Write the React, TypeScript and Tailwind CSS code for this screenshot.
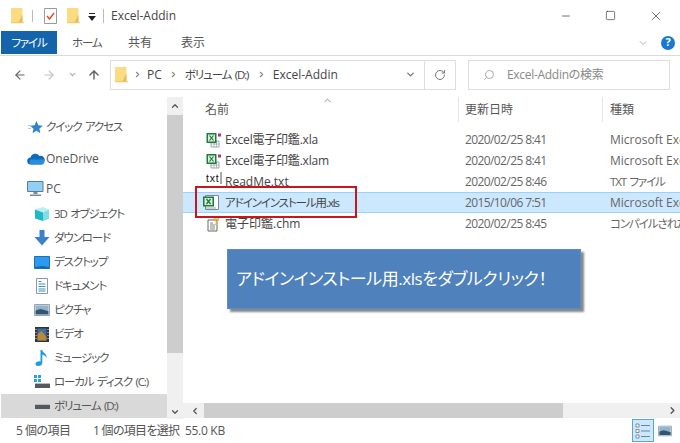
import { ChevronDown, ChevronUp, ChevronLeft, ChevronRight, ArrowLeft, ArrowRight, ArrowUp, RotateCw, Search, Minus, Square, X } from "lucide-react";
import type { ReactNode } from "react";

const FONT = "font-['Open_Sans','Noto_Sans_CJK_JP',sans-serif] [font-feature-settings:'palt']";
// Katakana in the reference is set much narrower than Noto's
const KANA = "text-[11.5px] tracking-[-1.1px] [word-spacing:1.5px]";

function FolderIcon({ className = "" }: { className?: string }) {
  return (
    <svg viewBox="0 0 13 16" className={className}>
      <path d="M0 0.5h11.5v13.5l1.5 1.5H0z" fill="#fbdc83" />
      <path d="M11.5 7v7.5h-4z" fill="#e6bd5c" />
      <path d="M0 15h13v.7H0z" fill="#e3b95a" />
    </svg>
  );
}

function ExcelIcon({ legacy = false }: { legacy?: boolean }) {
  if (legacy) {
    return (
      <svg viewBox="0 0 18 17" className="mr-[2px] h-[17px] w-[18px]">
        <path d="M3.500 1.500h13v14h-13z" fill="#fff" stroke="#7a8a90" />
        <path d="M1 2.500h11v10H1z" fill="#1f7a3c" />
        <path d="M2.500 4h8v7h-8z" fill="#d8efdc" />
        <path d="M4.500 5l4 5M8.500 5l-4 5" stroke="#1f7a3c" strokeWidth="1.300" />
        <path d="M4 14h10" stroke="#9aa6ab" />
      </svg>
    );
  }
  return (
    <svg viewBox="0 0 16 16" className="h-4 w-4">
      <path d="M5 9h8v6H5z" fill="#fff" stroke="#8a949a" strokeWidth="0.8" />
      <path d="M5 12h8M8 9v6M10.500 9v6" stroke="#8a949a" strokeWidth="0.6" />
      <path d="M0.5 1h10v10h-10z" fill="#1f7a3c" />
      <path d="M2 2.500h7v7H2z" fill="#d8efdc" />
      <path d="M3.500 3.500l4 5M7.500 3.500l-4 5" stroke="#1f7a3c" strokeWidth="1.200" />
      <path d="M12 1.500h3v3h-3z" fill="#b5307e" />
    </svg>
  );
}

function TxtIcon() {
  return (
    <svg viewBox="0 0 16 16" className="h-4 w-4 overflow-visible">
      <path d="M15 -2v12" stroke="#555" strokeWidth="1" />
      <text x="0" y="8" fontSize="10.500" letterSpacing="0.8" fontFamily="'Liberation Sans',sans-serif" fill="#111">txt</text>
    </svg>
  );
}

function ChmIcon() {
  return (
    <svg viewBox="0 0 16 16" className="h-4 w-4">
      <path d="M2 4h9v11H2z" fill="#fff" stroke="#666" />
      <path d="M4 7h3M4 9h5M4 11h5M4 13h5" stroke="#666" strokeWidth="0.8" />
      <text x="7" y="9" fontSize="11" fontWeight="700" fontFamily="'Liberation Sans',sans-serif" fill="#e3b21c">?</text>
    </svg>
  );
}

const NAV_ICONS: Record<string, ReactNode> = {
  star: (
    <svg viewBox="0 0 16 16" className="h-[15px] w-[15px]">
      <path d="M9 1l2 4.700 4.700.4-3.600 3.100 1.100 4.800L9 11.500 4.800 14l1.100-4.800L2.300 6.100 7 5.700z" fill="#2f83c8" />
      <path d="M0 6h3M0 9h3" stroke="#9cc6e6" />
    </svg>
  ),
  cloud: (
    <svg viewBox="0 0 18 12" className="h-[12px] w-[18px]">
      <path d="M4 11.500a3.500 3.500 0 0 1-.5-7A5 5 0 0 1 12.500 3 4 4 0 0 1 17.500 8c0 2-1.500 3.500-3 3.500z" fill="#0f6cbd" />
      <path d="M4 11.500a3 3 0 0 1 0-5h13.300c.6 3-1.300 5-3.300 5z" fill="#2a8ddb" />
    </svg>
  ),
  pc: (
    <svg viewBox="0 0 17 15" className="h-[15px] w-[17px]">
      <path d="M.5.500h15.500v10H.5z" fill="#8fd0f7" stroke="#5e7d92" />
      <path d="M6.500 11h4v2h-4zM3 13.500h11V15H3z" fill="#7d8a94" />
    </svg>
  ),
  cube: (
    <svg viewBox="0 0 16 16" className="h-4 w-4">
      <path d="M1 3.500L9 1l6 2.500-6 3z" fill="#b9f0f2" />
      <path d="M1 3.500l8 3V15l-8-2.500z" fill="#1fb7c9" />
      <path d="M9 6.500l6-3V13l-6 2z" fill="#7fdde4" />
    </svg>
  ),
  down: (
    <svg viewBox="0 0 16 16" className="h-4 w-4">
      <path d="M5.500 0h5v7h5L8 15.500.5 7h5z" fill="#3a80cf" />
    </svg>
  ),
  desktop: (
    <svg viewBox="0 0 16 13" className="h-[13px] w-4">
      <path d="M.5.500h15v12H.5z" fill="#2b9bf0" stroke="#1a6fb5" />
      <path d="M1 11l7-1 7 1v1H1z" fill="#1366ac" />
    </svg>
  ),
  doc: (
    <svg viewBox="0 0 14 16" className="h-4 w-[14px]">
      <path d="M1.500.5h11v15h-11z" fill="#fff" stroke="#8b99a3" />
      <path d="M3.500 3.500h3M3.500 6h7M3.500 8.500h7M3.500 11h7M3.500 13h7" stroke="#3a93bf" strokeWidth="1.100" />
    </svg>
  ),
  picture: (
    <svg viewBox="0 0 16 12" className="h-[12px] w-4">
      <path d="M.5.500h15v11H.5z" fill="#dfe8ee" stroke="#98a4ac" />
      <path d="M1.500 1.500h13v5h-13z" fill="#8fb3d1" />
      <path d="M1.500 6.500l5-1.500 8 2v3.500h-13z" fill="#31566e" />
    </svg>
  ),
  video: (
    <svg viewBox="0 0 14 15" className="h-[15px] w-[14px]">
      <path d="M0 0h14v15H0z" fill="#333" />
      <path d="M2.500 1.500h9v12h-9z" fill="#3d6ea8" />
      <path d="M2.500 7l4-3 5 6v3.500h-9z" fill="#b98a3a" />
      <path d="M1 2v1M1 5v1M1 8v1M1 11v1M13 2v1M13 5v1M13 8v1M13 11v1" stroke="#ddd" />
    </svg>
  ),
  music: (
    <svg viewBox="0 0 14 16" className="h-4 w-[14px]">
      <path d="M5.500 0h1.800c.3 3 5 3.500 4.200 8-.5-2-2.500-3-4.200-3.300V13c0 2-2 3-4 3S0 15 .5 13.500 3.500 11 5.500 11.500z" fill="#1b9ce5" />
    </svg>
  ),
  localDisk: (
    <svg viewBox="0 0 16 14" className="h-[14px] w-4">
      <path d="M0 0h3v3H0zM4 0h3v3H4zM0 4h3v3H0zM4 4h3v3H4z" fill="#29a3e0" />
      <path d="M1 9h15v4H1z" fill="#54595e" />
      <path d="M1 8h15v1H1z" fill="#b6bcc1" />
    </svg>
  ),
  disk: (
    <svg viewBox="0 0 16 6" className="h-[6px] w-4">
      <path d="M1 2h15v4H1z" fill="#54595e" />
      <path d="M1 1h15v1H1z" fill="#b6bcc1" />
    </svg>
  ),
};

const NAV_TOP = [
  { icon: "star", label: "クイック アクセス", h: "h-[32px]", cls: KANA },
  { icon: "cloud", label: "OneDrive", h: "h-[32px]", cls: "" },
  { icon: "pc", label: "PC", h: "h-[27px]", cls: "" },
];

const NAV_SUB = [
  { icon: "cube", label: "3D オブジェクト" },
  { icon: "down", label: "ダウンロード" },
  { icon: "desktop", label: "デスクトップ" },
  { icon: "doc", label: "ドキュメント" },
  { icon: "picture", label: "ピクチャ" },
  { icon: "video", label: "ビデオ" },
  { icon: "music", label: "ミュージック" },
  { icon: "localDisk", label: "ローカル ディスク (C:)" },
  { icon: "disk", label: "ボリューム (D:)", selected: true },
];

const FILES = [
  { name: "Excel電子印鑑.xla", date: "2020/02/25 8:41", type: "Microsoft Excel アドイン", icon: <ExcelIcon />, nameCls: "tracking-[-0.2px]", typeCls: "" },
  { name: "Excel電子印鑑.xlam", date: "2020/02/25 8:41", type: "Microsoft Excel アドイン", icon: <ExcelIcon />, nameCls: "tracking-[-0.2px]", typeCls: "" },
  { name: "ReadMe.txt", date: "2020/02/25 8:46", type: "TXT ファイル", icon: <TxtIcon />, nameCls: "", typeCls: KANA },
  { name: "アドインインストール用.xls", date: "2015/10/06 7:51", type: "Microsoft Excel 97-2003", icon: <ExcelIcon legacy />, selected: true, nameCls: KANA, typeCls: "" },
  { name: "電子印鑑.chm", date: "2020/02/25 8:45", type: "コンパイルされた HTML", icon: <ChmIcon />, nameCls: "", typeCls: KANA },
];

export default function App() {
  return (
    <div className={`relative flex h-[443px] w-[680px] flex-col overflow-hidden bg-white text-[12px] text-[#555] ${FONT}`}>
      {/* Title bar */}
      <div className="flex h-[31px] items-center">
        <FolderIcon className="ml-[11px] h-[17px] w-[13px]" />
        <div className="ml-[8px] h-[12px] w-px bg-[#bbb]" />
        <svg viewBox="0 0 13 16" className="ml-[11px] h-[16px] w-[13px]">
          <path d="M.5.500h12v15H.5z" fill="#fff" stroke="#9a9a9a" />
          <path d="M3 8l2.500 3L10 5" fill="none" stroke="#d8532b" strokeWidth="1.500" />
        </svg>
        <FolderIcon className="ml-[10px] h-[17px] w-[13px]" />
        <svg viewBox="0 0 8 8" className="ml-[8px] mt-[2px] h-[8px] w-[8px]">
          <path d="M1 0h6v1H1z M0 3h8L4 8z" fill="#222" />
        </svg>
        <div className="ml-[7px] h-[14px] w-px bg-[#bbb]" />
        <span className="ml-[7px] text-[12px] text-[#444]">Excel-Addin</span>
        <div className="ml-auto flex items-center gap-[33px] pr-[17px] text-[#222]">
          <Minus size={12} strokeWidth={1.300} />
          <Square size={11} strokeWidth={1.300} />
          <X size={14} strokeWidth={1.100} />
        </div>
      </div>

      {/* Ribbon tabs */}
      <div className="flex h-[25px] items-center border-b border-[#dadada] pb-px">
        <div className={`ml-px flex h-[23px] w-[56px] items-center justify-center bg-[#1464ac] text-white ${KANA}`}>ファイル</div>
        <span className={`ml-[15px] w-[56px] text-[#555] ${KANA}`}>ホーム</span>
        <span className="w-[53px] text-[#555]">共有</span>
        <span className="text-[#555]">表示</span>
        <ChevronDown size={12} className="ml-auto text-[#b5b5b5]" />
        <div className="ml-[12px] mr-[5px] flex h-[14px] w-[14px] items-center justify-center rounded-full bg-[#1a78d0] text-[11px] font-bold text-white">?</div>
      </div>

      {/* Address row */}
      <div className="flex h-[41px] items-center pt-[1px] pb-[5px]">
        <ArrowLeft size={14} className="ml-[13px] text-[#666]" />
        <ArrowRight size={14} className="ml-[15px] text-[#c4c4c4]" />
        <ChevronDown size={9} strokeWidth={3} className="ml-[12px] text-[#aaa]" />
        <ArrowUp size={14} strokeWidth={2.500} className="ml-[10px] text-[#666]" />
        <div className="ml-[9px] flex h-[30px] w-[346px] items-center border border-[#dedede]">
          <FolderIcon className="ml-[4px] h-[17px] w-[13px]" />
          <ChevronRight size={9} strokeWidth={3} className="ml-[5px] text-[#888]" />
          <span className="ml-[5px] text-[#444]">PC</span>
          <ChevronRight size={9} strokeWidth={3} className="ml-[7px] text-[#888]" />
          <span className={`ml-[7px] w-[66px] whitespace-nowrap text-[#444] ${KANA}`}>ボリューム (D:)</span>
          <ChevronRight size={9} strokeWidth={3} className="ml-[6px] text-[#888]" />
          <span className="ml-[7px] text-[#444]">Excel-Addin</span>
          <ChevronDown size={11} strokeWidth={3} className="ml-auto mr-[8px] text-[#777]" />
          <div className="flex h-full w-[31px] items-center justify-center border-l border-[#dedede]">
            <RotateCw size={12} strokeWidth={2} className="text-[#777]" />
          </div>
        </div>
        <div className="ml-[12px] flex h-[30px] w-[202px] items-center border border-[#dedede] text-[#888]">
          <Search size={12} className="ml-[14px] -scale-x-100 text-[#aaa]" />
          <span className="ml-[12px] tracking-[-0.3px]">Excel-Addinの検索</span>
        </div>
      </div>

      {/* Main */}
      <div className="flex min-h-0 flex-1">
        <div className="flex w-[167px] flex-col pl-px">
          <div className="h-[14px]" />
          {NAV_TOP.map((item) => (
            <div key={item.label} className={`flex items-center ${item.h}`}>
              <div className="ml-[24px] flex w-[21px] justify-center">{NAV_ICONS[item.icon]}</div>
              <span className={`whitespace-nowrap ${item.cls}`}>{item.label}</span>
            </div>
          ))}
          {NAV_SUB.map((item) => (
            <div key={item.label} className={`flex h-[24px] shrink-0 items-center ${item.selected ? "bg-[#d9d9d9]" : ""}`}>
              <div className="ml-[32px] flex w-[17px] justify-center">{NAV_ICONS[item.icon]}</div>
              <span className={`ml-[4px] whitespace-nowrap ${KANA}`}>{item.label}</span>
            </div>
          ))}
        </div>

        {/* Nav scrollbar */}
        <div className="flex h-[322px] w-[16px] flex-col bg-[#f0f0f0]">
          <div className="flex h-[18px] items-center justify-center"><ChevronUp size={10} strokeWidth={3} className="text-[#555]" /></div>
          <div className="h-[238px] bg-[#cdcdcd]" />
          <div className="mt-auto flex h-[14px] items-center justify-center"><ChevronDown size={10} strokeWidth={3} className="text-[#555]" /></div>
        </div>

        {/* File list */}
        <div className="flex min-w-0 flex-1 flex-col">
          <div className="flex h-[25px] shrink-0 items-center">
            <div className="relative w-[275px] pl-[22px]">
              名前
              <ChevronUp size={11} className="absolute left-[139px] -top-[6px] text-[#888]" />
            </div>
            <div className="h-[25px] w-px bg-[#e5e5e5]" />
            <div className="w-[143px] pl-[6px]">更新日時</div>
            <div className="h-[25px] w-px bg-[#e5e5e5]" />
            <div className="pl-[7px] whitespace-nowrap">種類</div>
          </div>
          <div className="flex-1 overflow-hidden pt-[7px]">
            {FILES.map((file) => (
              <div
                key={file.name}
                className={`grid h-[21px] grid-cols-[42px_240px_145px_1fr] items-center whitespace-nowrap ${file.selected ? "border-y border-[#99d1ff] bg-[#cce8ff]" : ""}`}
              >
                <div className="flex w-[39px] justify-end">{file.icon}</div>
                <span className={`text-[#444] ${file.nameCls}`}>{file.name}</span>
                <span className="tracking-[-0.6px] text-[#666]">{file.date}</span>
                <span className={`overflow-hidden text-[#666] ${file.typeCls}`}>{file.type}</span>
              </div>
            ))}
          </div>
          {/* Horizontal scrollbar */}
          <div className="flex h-[15px] shrink-0 items-center bg-[#f0f0f0]">
            <div className="flex w-[21px] justify-center pl-[3px]"><ChevronLeft size={10} strokeWidth={3} className="text-[#555]" /></div>
            <div className="h-full w-[359px] bg-[#cdcdcd]" />
            <div className="ml-auto pr-[2px]"><ChevronRight size={11} strokeWidth={3} className="text-[#555]" /></div>
          </div>
        </div>
      </div>

      {/* Status bar */}
      <div className="flex h-[25px] shrink-0 items-center whitespace-nowrap text-[#555]">
        <span className="ml-[16px] w-[77px] tracking-[-0.5px]">5 個の項目</span>
        <span className="w-[92px] tracking-[-0.7px]">1 個の項目を選択</span>
        <span className="tracking-[-0.3px]">55.0 KB</span>
        <div className="ml-auto mr-[8px] flex items-center gap-[4px]">
          <div className="flex h-[23px] w-[22px] items-center justify-center border border-[#5ba6cc] bg-[#cce8ff]">
            <svg viewBox="0 0 16 16" className="h-4 w-4">
              <path d="M1 1h3v3H1zM1 6.500h3v3H1zM1 12h3v3H1z" fill="#fff" stroke="#666" strokeWidth="0.700" />
              <path d="M6 2.500h9M6 8h9M6 13.500h9" stroke="#6a8598" />
            </svg>
          </div>
          <svg viewBox="0 0 16 12" className="h-[12px] w-[14px]">
            <path d="M.5.500h15v11H.5z" fill="#dfe8ee" stroke="#98a4ac" />
            <path d="M1.500 1.500h13v5h-13z" fill="#8fb3d1" />
            <path d="M1.500 6.500l5-1.500 8 2v3.500h-13z" fill="#31566e" />
          </svg>
        </div>
      </div>

      {/* Annotations over the screenshot */}
      <div className="absolute left-[195px] top-[186px] h-[32px] w-[162px] border-2 border-[#c8161d]" />
      <div className="absolute left-[227px] top-[249px] flex h-[60px] w-[354px] items-center whitespace-nowrap border border-[#5b8cc6] bg-[#4f81bd] pl-[8px] text-[17px] tracking-[-0.45px] text-white shadow-[3px_3px_2px_#888]">
        アドインインストール用.xlsをダブルクリック！
      </div>
    </div>
  );
}
